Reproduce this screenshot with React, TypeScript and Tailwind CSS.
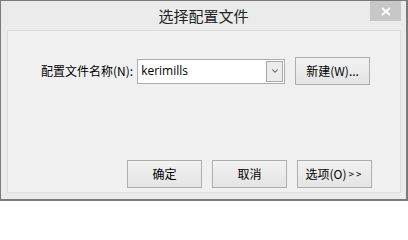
import { ChevronDown } from 'lucide-react';

const FONT = "font-['Noto_Sans_CJK_SC','Liberation_Sans',sans-serif]";

function Btn({ label, extra }: { label: string; extra?: string }) {
  return (
    <button
      className="w-[75px] h-[28px] flex items-center justify-center border border-[#adadad] bg-gradient-to-b from-[#f2f2f2] to-[#e4e4e4] text-[12px] text-black leading-none"
    >
      <span>{label}</span>
      {extra && <span className="text-[10px] ml-[2px] tracking-[2px]">{extra}</span>}
    </button>
  );
}

export default function App() {
  return (
    <div
      className={`w-[408px] h-[201px] flex flex-col bg-[#ebebeb] border-l border-t border-r-2 border-b-2 border-[#7a7a7a] ${FONT}`}
    >
      <div className="relative h-[29px] flex items-center justify-center">
        <span className="text-[15px] text-[#222] leading-none">选择配置文件</span>
        <div className="absolute right-[5px] top-0 w-[31px] h-[20px] bg-[#c7c7c7] flex items-center justify-center">
          <svg width="10" height="9" viewBox="0 0 10 9">
            <path d="M1 1 L9 8 M9 1 L1 8" stroke="#fff" strokeWidth="2" />
          </svg>
        </div>
      </div>

      <div className="flex-1 flex flex-col ml-[6px] mr-[5px] mb-[6px] border border-[#dcdcdc] bg-[#f0f0f0]">
        <div className="mt-[26px] flex items-center pl-[33px]">
          <span className="text-[12px] text-black leading-none">配置文件名称(N):</span>
          <div className="ml-[4px] w-[148px] h-[25px] flex items-center justify-between border border-[#abadb3] bg-white pl-[3px] pr-[1px]">
            <span className="text-[12px] text-black font-['Open_Sans',sans-serif] leading-none">kerimills</span>
            <div className="w-[17px] h-[21px] border border-[#a8a8a8] bg-[#ececec] flex items-center justify-center">
              <ChevronDown size={10} strokeWidth={2.5} color="#555" />
            </div>
          </div>
          <div className="ml-[10px]">
            <Btn label="新建(W)..." />
          </div>
        </div>

        <div className="flex-1" />

        <div className="flex justify-end gap-[10px] pr-[28px] pb-[4px]">
          <Btn label="确定" />
          <Btn label="取消" />
          <Btn label="选项(O)" extra=">>" />
        </div>
      </div>
    </div>
  );
}
